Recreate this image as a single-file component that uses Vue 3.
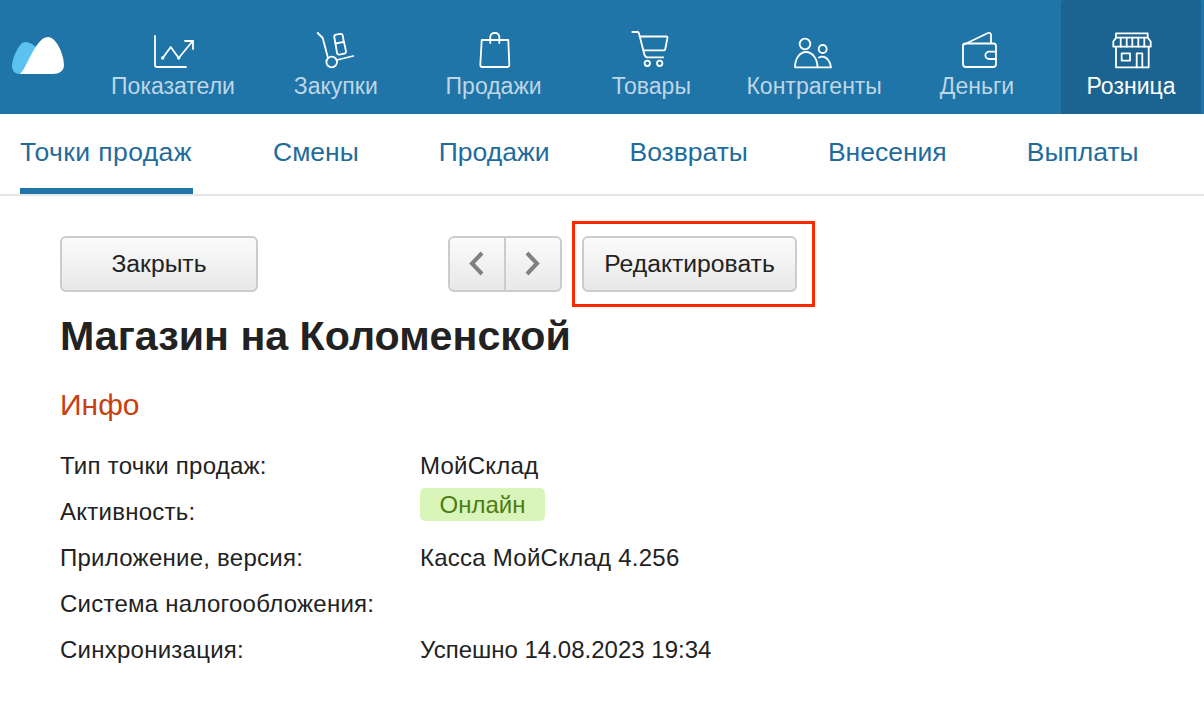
<template>
  <div class="page">
    <header class="topbar">
      <svg class="logo" width="52" height="38" viewBox="0 0 52 38">
        <path d="M13 5C7 5 0 22 0 29c0 5 3 8 8 8h6c8 0 14-8 18-15C28 12 20 5 13 5z" fill="#5cc2f0" />
        <path d="M36 0c-7 0-12 9-18 20-4 8-7 14-10 17h33c6 0 11-3 11-9C52 17 44 0 36 0z" fill="#fff" />
      </svg>
      <nav class="menu">
        <a v-for="item in menu" :key="item.name" class="menu-item" :class="{ wide: item.wide, active: item.active }">
          <svg width="48" height="46" viewBox="0 0 48 46" fill="none" stroke="#fff" stroke-width="1.8" stroke-linecap="round" stroke-linejoin="round">
            <path v-for="d in item.paths" :key="d" :d="d" />
            <circle v-for="c in item.circles" :key="c[0] + '-' + c[1]" :cx="c[0]" :cy="c[1]" :r="c[2]" />
          </svg>
          <span>{{ item.name }}</span>
        </a>
      </nav>
    </header>

    <nav class="tabs">
      <a v-for="(tab, i) in tabs" :key="tab" class="tab" :class="{ current: i === 0 }">{{ tab }}</a>
    </nav>

    <main class="content">
      <div class="toolbar">
        <button class="btn close">Закрыть</button>
        <div class="pager">
          <button class="btn arrow">
            <svg width="18" height="26" viewBox="0 0 18 26" fill="none" stroke="#808080" stroke-width="4"><path d="M14 2 4 12.5 14 23" /></svg>
          </button>
          <button class="btn arrow next">
            <svg width="18" height="26" viewBox="0 0 18 26" fill="none" stroke="#808080" stroke-width="4"><path d="m4 2 10 10.5L4 23" /></svg>
          </button>
        </div>
        <div class="marked">
          <button class="btn edit">Редактировать</button>
          <span class="frame"></span>
        </div>
      </div>

      <h1>Магазин на Коломенской</h1>
      <h2>Инфо</h2>

      <dl class="info">
        <div class="row">
          <dt>Тип точки продаж:</dt>
          <dd>МойСклад</dd>
        </div>
        <div class="row">
          <dt>Активность:</dt>
          <dd><span class="chip">Онлайн</span></dd>
        </div>
        <div class="row">
          <dt>Приложение, версия:</dt>
          <dd>Касса МойСклад 4.256</dd>
        </div>
        <div class="row">
          <dt>Система налогообложения:</dt>
          <dd></dd>
        </div>
        <div class="row">
          <dt>Синхронизация:</dt>
          <dd class="plain">Успешно 14.08.2023 19:34</dd>
        </div>
      </dl>
    </main>
  </div>
</template>

<script setup>
const menu = [
  {
    name: 'Показатели',
    wide: true,
    paths: ['M6 4v29a2 2 0 0 0 2 2h29', 'M13.7 26l8-11 8 11 14-17', 'M36 9h8v8'],
    circles: [[13.7, 26, 0.8], [29.7, 26, 0.8]]
  },
  {
    name: 'Закупки',
    paths: [
      'M5.7 1l5 5 5.3 20',
      'M24.7 28l16.6-4',
      'M23.5 12 22.3 5a2 2 0 0 1 1.6-2.3l4.5-.8a2 2 0 0 1 2.3 1.6l1.2 7',
      'M23.5 11.5l8.5-1.6 2 9.3a2 2 0 0 1-1.6 2.4l-5 1a2 2 0 0 1-2.4-1.6z'
    ],
    circles: [[19.7, 30, 5.3]]
  },
  {
    name: 'Продажи',
    paths: [
      'M11.7 8h26.6l1 25a2 2 0 0 1-2 2H12.3a2 2 0 0 1-2-2z',
      'M20.3 11V5a4 4 0 0 1 4-4h1a4 4 0 0 1 4 4v6'
    ],
    circles: []
  },
  {
    name: 'Товары',
    paths: [
      'M5.3 0h5.5a1 1 0 0 1 1 .8L17 21c.5 3 1.5 4.3 3.5 4.3h15.8',
      'M13 4.5h26.5a1 1 0 0 1 1 1.2l-2.3 11.5a1.5 1.5 0 0 1-1.5 1.2H16.5'
    ],
    circles: [[20.3, 31.3, 2.7], [32.7, 31.3, 2.7]]
  },
  {
    name: 'Контрагенты',
    wide: true,
    paths: [
      'M5 35.3c0-9 5-15.3 11-15.3s11.5 6.3 11.5 15.3z',
      'M29 25.5c1-.5 2-.8 3-.8 4.5 0 8.5 4.5 9 10.6H27.5'
    ],
    circles: [[15, 12, 5.3], [32.7, 17, 4]]
  },
  {
    name: 'Деньги',
    paths: [
      'M10 14v18a3 3 0 0 0 3 3h27a3 3 0 0 0 3-3V14a2.5 2.5 0 0 0-2.5-2.5h-28A2.5 2.5 0 0 0 10 14z',
      'M10 13 35 1a2 2 0 0 1 3 1.5V11',
      'M43 19.7h-7a3.6 3.6 0 0 0 0 7.3h7'
    ],
    circles: []
  },
  {
    name: 'Розница',
    active: true,
    paths: [
      'M9 5.7V1.3h31.7v4.4',
      'M6.3 14.7V9.5L9 5.7h31.7l3 3.8v5.2z',
      'M13.7 5.7v9M19.7 5.7v9M25.3 5.7v9M31.3 5.7v9M37.3 5.7v9',
      'M9 14.7v20.6h32.7V14.7',
      'M14.7 21.3H23v7.4h-8.3z',
      'M29.7 35.3v-14h5.6v14'
    ],
    circles: []
  }
]

const tabs = ['Точки продаж', 'Смены', 'Продажи', 'Возвраты', 'Внесения', 'Выплаты']
</script>

<style scoped>
.page {
  width: 1204px;
  height: 718px;
  overflow: hidden;
  background: #fff;
  color: #222;
  font-family: "Liberation Sans", Arial, sans-serif;
}

.topbar {
  display: flex;
  align-items: center;
  height: 114px;
  background: #1f74a8;
}

.logo {
  margin-left: 12px;
  margin-right: 34px;
  margin-top: -3px;
}

.menu {
  display: flex;
  gap: 17.8px;
  height: 100%;
}

.menu-item {
  display: flex;
  flex-direction: column;
  align-items: center;
  width: 140px;
  padding-top: 32px;
  box-sizing: border-box;
  color: #bed6e6;
  font-size: 23px;
  line-height: 24px;
  white-space: nowrap;
  border-radius: 4px 4px 0 0;
}

.menu-item svg {
  flex: none;
  overflow: visible;
  margin-bottom: -4px;
}

.menu-item.wide {
  width: 150px;
}

.menu-item.active {
  margin-left: -3.8px;
  background: #1b6491;
  color: #fff;
}

.tabs {
  display: flex;
  gap: 80px;
  height: 80px;
  padding-left: 20px;
  border-bottom: 2px solid #e6e6e6;
}

.tab {
  height: 80px;
  box-sizing: border-box;
  padding-top: 23px;
  font-size: 26.5px;
  line-height: 30px;
  color: #1f6c9c;
  white-space: nowrap;
}

.tab.current {
  width: 173px;
  letter-spacing: 0.4px;
  border-bottom: 6px solid #1f74a8;
}

.content {
  padding: 40px 60px 0;
}

.toolbar {
  display: flex;
  align-items: center;
  height: 56px;
}

.btn {
  height: 56px;
  padding: 0;
  box-sizing: border-box;
  border: 2px solid #ccc;
  border-radius: 6px;
  background: linear-gradient(#fbfbfb, #e8e8e9);
  color: #222;
  font: 24.7px "Liberation Sans", Arial, sans-serif;
}

.close {
  width: 198px;
  margin-right: 190px;
}

.pager {
  display: flex;
  margin-right: 20px;
}

.arrow {
  display: flex;
  align-items: center;
  justify-content: center;
  width: 58px;
}

.arrow:first-child {
  border-radius: 6px 0 0 6px;
}

.arrow.next {
  width: 56px;
  padding-right: 2px;
  border-left: none;
  border-radius: 0 6px 6px 0;
}

.marked {
  position: relative;
}

.edit {
  display: block;
  width: 215px;
}

.frame {
  position: absolute;
  left: -10px;
  top: -15px;
  width: 243px;
  height: 86px;
  box-sizing: border-box;
  border: 3px solid #ff2600;
}

h1 {
  margin: 22px 0 0;
  font-size: 41.2px;
  line-height: 44px;
  font-weight: bold;
}

h2 {
  margin: 30px 0 0;
  font-size: 30px;
  line-height: 34px;
  font-weight: normal;
  color: #c8400f;
}

.info {
  margin: 21px 0 0;
}

.row {
  display: flex;
  align-items: center;
  height: 46px;
  font-size: 24px;
  letter-spacing: 0.25px;
}

dt {
  width: 360px;
}

dd {
  margin: 0;
}

dd.plain {
  letter-spacing: 0;
}

.chip {
  display: block;
  width: 125px;
  height: 33px;
  margin-top: -16px;
  border-radius: 5px;
  background: #d9f5b9;
  color: #4a7d14;
  letter-spacing: 0;
  line-height: 33px;
  text-align: center;
}
</style>
